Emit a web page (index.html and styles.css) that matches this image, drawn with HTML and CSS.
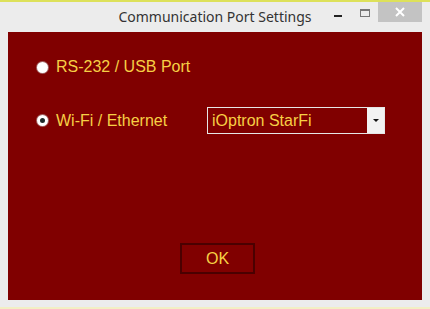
FILE: index.html
```html
<!DOCTYPE HTML>
<html>
<head>
    <meta charset="UTF-8">
    <title>Communication Port Settings</title>
    <link rel="stylesheet" href="styles.css">
</head>
<body>
    <div class="window">
        <div class="titlebar">
            <span></span>
            <p class="title">Communication Port Settings</p>
            <div class="controls">
                <span class="min"></span>
                <span class="max"></span>
                <span class="close">
                    <svg width="10" height="10" viewBox="0 0 10 10"><path d="M1 1L9 9M9 1L1 9" stroke="#fff" stroke-width="2"/></svg>
                </span>
            </div>
        </div>
        <div class="client">
            <div class="row">
                <label class="opt"><i class="radio"></i>RS-232 / USB Port</label>
            </div>
            <div class="row row2">
                <label class="opt"><i class="radio on"></i>Wi-Fi / Ethernet</label>
                <div class="select">
                    <span class="value">iOptron StarFi</span>
                    <span class="arrow"></span>
                </div>
            </div>
            <div class="btn-row">
                <div class="ok">OK</div>
            </div>
        </div>
        <div class="bottom"></div>
    </div>
</body>
</html>
```

FILE: styles.css
```css
body{margin:0;}
p{margin:0;}
html,body{
    width: 430px;
    height: 309px;
    overflow: hidden;
    background: #ebebeb;
}

.window{
    width: 430px;
    height: 307px;
    border-top: 2px solid #dde15a;
    box-sizing: border-box;
    background: #ececec;
}
.titlebar{
    display: grid;
    grid-template-columns: 1fr auto 1fr;
    height: 30px;
}
.title{
    font-family: "Noto Sans", sans-serif;
    font-size: 14px;
    line-height: 30px;
    color: #333;
}
.controls{
    display: flex;
    justify-content: flex-end;
    align-items: flex-start;
    padding-right: 8px;
}
.min{
    width: 8px;
    height: 2px;
    margin: 13px 18px 0 0;
    background: #222;
}
.max{
    width: 8px;
    height: 5px;
    margin: 7px 8px 0 0;
    border: 1px solid #777;
    border-top-width: 2px;
}
.close{
    display: flex;
    align-items: center;
    justify-content: center;
    width: 44px;
    height: 20px;
    background: #c3c3c3;
}

.client{
    height: 268px;
    margin: 0 8px;
    padding: 25px 0 0 29px;
    box-sizing: border-box;
    background: #800000;
    font-family: "Liberation Sans", Arial, sans-serif;
    font-size: 16px;
    color: #f6cf45;
}
.row{
    display: flex;
    align-items: center;
    height: 20px;
}
.row2{
    height: 27px;
    margin-top: 30px;
}
.opt{
    display: flex;
    align-items: center;
    width: 170px;
}
.radio{
    width: 11px;
    height: 11px;
    margin-right: 8px;
    border-radius: 50%;
    background: #fff;
    box-sizing: border-box;
    box-shadow: 0 0 0 1px rgba(200,200,200,.5);
}
.radio.on{
    border: 3px solid #fff;
    background: #1e2a2a;
}
.select{
    display: flex;
    width: 178px;
    height: 27px;
    border: 1px solid #e6e6e6;
    box-sizing: border-box;
}
.select .value{
    flex: 1;
    padding-left: 4px;
    line-height: 25px;
}
.select .arrow{
    position: relative;
    width: 17px;
    background: #f2f2f2;
}
.select .arrow:after{
    content: "";
    position: absolute;
    left: 6px;
    top: 11px;
    border: 3px solid transparent;
    border-top: 3px solid #111;
}
.btn-row{
    display: flex;
    justify-content: center;
    padding: 109px 24px 0 0;
}
.ok{
    width: 75px;
    height: 31px;
    border: 2px solid #4a0000;
    box-sizing: border-box;
    text-align: center;
    line-height: 27px;
}
.bottom{
    height: 7px;
}
body:after{
    content: "";
    display: block;
    height: 2px;
    background: #f2efc4;
}
```
